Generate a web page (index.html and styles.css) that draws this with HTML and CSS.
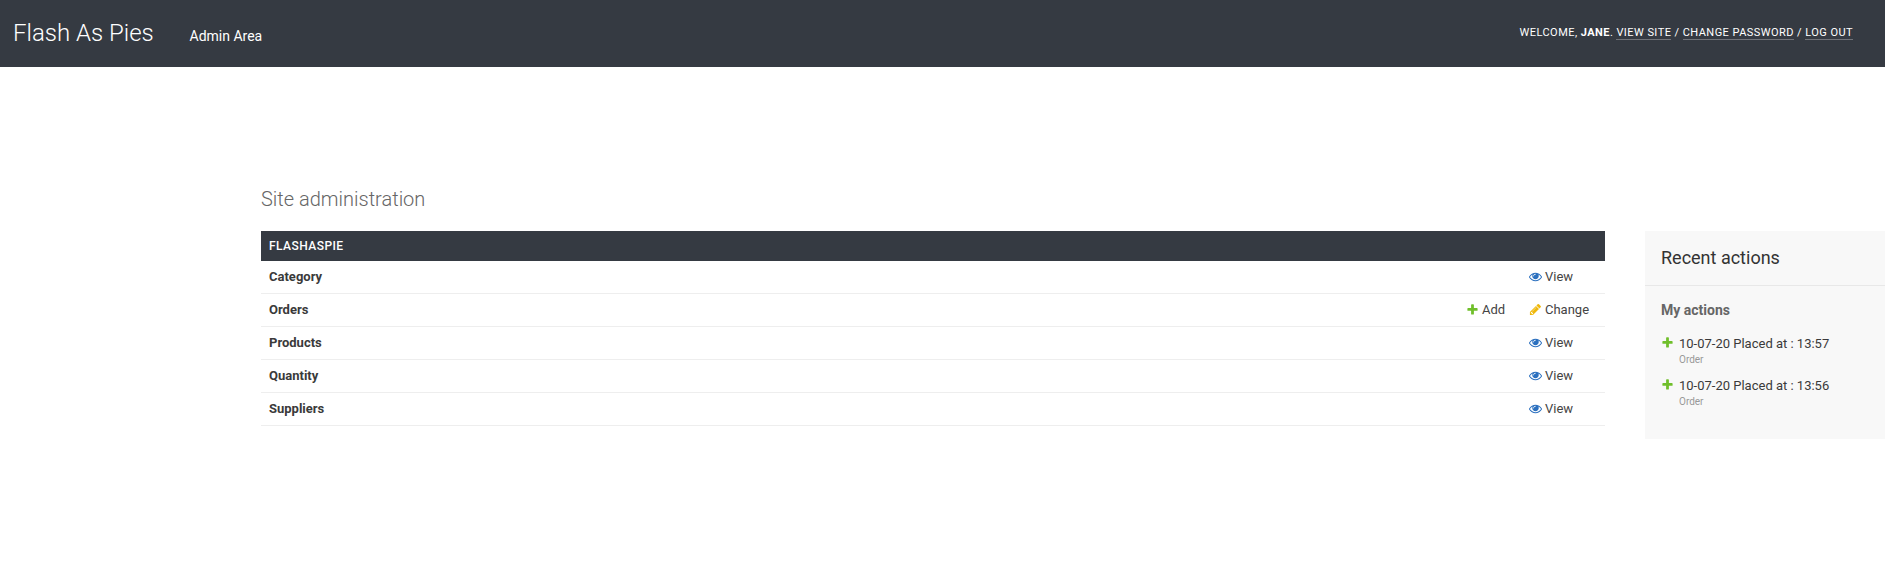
FILE: index.html
```html
<!DOCTYPE html>
<html lang="en">
<head>
<meta charset="utf-8">
<title>Site administration | Flash As Pies</title>
<link rel="stylesheet" href="styles.css">
</head>
<body>
<svg class="sprite" aria-hidden="true">
  <symbol id="add" viewBox="0 0 1792 1792"><path d="M1600 796v192q0 40-28 68t-68 28h-416v416q0 40-28 68t-68 28h-192q-40 0-68-28t-28-68v-416h-416q-40 0-68-28t-28-68v-192q0-40 28-68t68-28h416v-416q0-40 28-68t68-28h192q40 0 68 28t28 68v416h416q40 0 68 28t28 68z"/></symbol>
  <symbol id="change" viewBox="0 0 1792 1792"><path d="M491 1536l91-91-235-235-91 91v107h128v128h107zm523-928q0-22-22-22-10 0-17 7l-542 542q-7 7-7 17 0 22 22 22 10 0 17-7l542-542q7-7 7-17zm-54-192l416 416-832 832h-416v-416zm683 96q0 53-37 90l-166 166-416-416 166-165q36-38 90-38 53 0 91 38l235 234q37 39 37 91z"/></symbol>
  <symbol id="view" viewBox="0 0 1792 1792"><path d="M1664 960q-152-236-381-353 61 104 61 225 0 185-131.5 316.5t-316.5 131.5-316.5-131.5-131.5-316.5q0-121 61-225-229 117-381 353 133 205 333.5 326.5t434.5 121.5 434.5-121.5 333.5-326.5zm-720-384q0-20-14-34t-34-14q-125 0-214.5 89.5t-89.5 214.5q0 20 14 34t34 14 34-14 14-34q0-86 61-147t147-61q20 0 34-14t14-34zm848 384q0 34-20 69-140 230-376.5 368.5t-499.5 138.5-499.5-139-376.5-368q-20-35-20-69t20-69q140-229 376.5-368t499.5-139 499.5 139 376.5 368q20 35 20 69z"/></symbol>
</svg>
<header class="header">
  <h1 class="site-name">Flash As Pies</h1>
  <span class="area">Admin Area</span>
  <div class="user-tools">Welcome, <strong>Jane</strong>. <a>View site</a> / <a>Change password</a> / <a>Log out</a></div>
</header>
<main class="content">
  <h2 class="page-title">Site administration</h2>
  <div class="columns">
    <section class="module">
      <h3 class="caption">Flashaspie</h3>
      <div class="row"><b>Category</b><span></span><a class="link"><svg class="icon view"><use href="#view"/></svg>View</a></div>
      <div class="row"><b>Orders</b><a class="link"><svg class="icon add"><use href="#add"/></svg>Add</a><a class="link"><svg class="icon change"><use href="#change"/></svg>Change</a></div>
      <div class="row"><b>Products</b><span></span><a class="link"><svg class="icon view"><use href="#view"/></svg>View</a></div>
      <div class="row"><b>Quantity</b><span></span><a class="link"><svg class="icon view"><use href="#view"/></svg>View</a></div>
      <div class="row"><b>Suppliers</b><span></span><a class="link"><svg class="icon view"><use href="#view"/></svg>View</a></div>
    </section>
    <aside class="recent">
      <h2 class="recent-title">Recent actions</h2>
      <h3 class="recent-sub">My actions</h3>
      <ul class="actions">
        <li class="action"><svg class="icon add"><use href="#add"/></svg><div><a class="action-name">10-07-20 Placed at : 13:57</a><span class="kind">Order</span></div></li>
        <li class="action"><svg class="icon add"><use href="#add"/></svg><div><a class="action-name">10-07-20 Placed at : 13:56</a><span class="kind">Order</span></div></li>
      </ul>
    </aside>
  </div>
</main>
</body>
</html>
```
FILE: styles.css
```css
* { box-sizing: border-box; }
body { margin: 0; background: #fff; color: #333; font: 13px/17px Roboto, sans-serif; overflow-x: hidden; }
h1, h2, h3, ul { margin: 0; padding: 0; font-weight: 400; }
.sprite { display: none; }
.header { display: flex; align-items: baseline; height: 67px; padding: 18px 32px 0 13px; background: #353a42; color: #fff; }
.site-name { width: 176px; font-size: 24px; line-height: 30px; font-weight: 300; }
.area { padding-left: .5px; font-size: 14px; }
.user-tools { align-self: flex-start; margin: 6px 0 0 auto; font-size: 11px; line-height: 17px; letter-spacing: .45px; text-transform: uppercase; white-space: nowrap; }
.user-tools strong { font-weight: 700; }
.user-tools a { border-bottom: 1px solid #717379; }
.content { padding: 120px 0 0 261px; }
.page-title { margin-bottom: 20px; color: #666; font-size: 20px; line-height: 24px; font-weight: 300; }
.columns { display: flex; align-items: flex-start; gap: 40px; }
.module { width: 1344px; flex: none; }
.caption { height: 30px; padding: 7px 8px; background: #353a42; color: #fff; font-size: 12px; line-height: 16px; font-weight: 500; letter-spacing: .45px; text-transform: uppercase; }
.row { display: grid; grid-template-columns: 1fr 63px 76px; height: 33px; padding: 8px 0 0 8px; border-bottom: 1px solid #eee; line-height: 16px; }
.row b { color: #3a3a3a; font-weight: 700; }
.link { display: flex; gap: 3px; color: #444; }
.icon { display: block; flex: none; width: 13px; height: 13px; margin-top: 1px; }
.add { fill: #70bf2b; }
.change { fill: #efb80b; }
.view { fill: #2b70bf; }
.recent { flex: 1; height: 208px; background: #f8f8f8; }
.recent-title { height: 55px; padding: 16px; border-bottom: 1px solid #e8e8e8; font-size: 18px; line-height: 22px; }
.recent-sub { padding: 15px 16px 0; color: #666; font-size: 14px; line-height: 18px; font-weight: 700; }
.actions { padding: 16px 16px 0; list-style: none; }
.action { display: flex; height: 42px; gap: 5px; }
.action-name { display: block; color: #3a3a3a; line-height: 17px; }
.kind { display: block; color: #999; font-size: 10px; line-height: 15px; }
```
